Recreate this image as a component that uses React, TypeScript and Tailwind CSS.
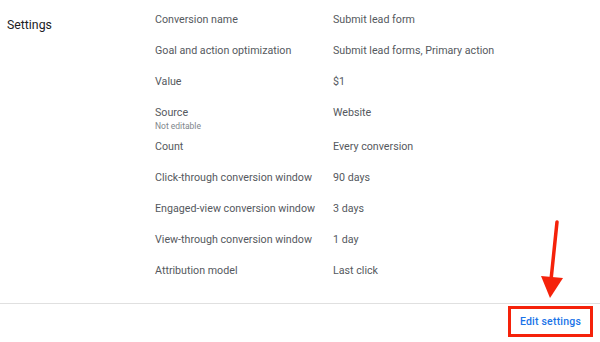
import React from "react";

const rows: { label: string; value: string; note?: string }[] = [
  { label: "Conversion name", value: "Submit lead form" },
  { label: "Goal and action optimization", value: "Submit lead forms, Primary action" },
  { label: "Value", value: "$1" },
  { label: "Source", value: "Website", note: "Not editable" },
  { label: "Count", value: "Every conversion" },
  { label: "Click-through conversion window", value: "90 days" },
  { label: "Engaged-view conversion window", value: "3 days" },
  { label: "View-through conversion window", value: "1 day" },
  { label: "Attribution model", value: "Last click" },
];

export default function App() {
  return (
    <div className="relative w-[600px] h-[342px] overflow-hidden bg-white font-['Roboto',sans-serif]">
      <div className="flex">
        <div className="w-[155px] pl-[7px] pt-[16px] text-[12.3px] leading-[18px] text-[#202124]">
          Settings
        </div>
        <div className="flex flex-col pt-[4px] text-[10.7px] text-[#55595e]">
          {rows.map((r) =>
            r.note ? (
              <div key={r.label} className="flex h-[34px] pt-[8px]">
                <div className="w-[178px]">
                  <div className="leading-[15px]">{r.label}</div>
                  <div className="text-[8.5px] leading-[12px] text-[#80868b]">{r.note}</div>
                </div>
                <div className="leading-[15px]">{r.value}</div>
              </div>
            ) : (
              <div key={r.label} className="flex h-[31px] items-center leading-[15px]">
                <div className="w-[178px]">{r.label}</div>
                <div>{r.value}</div>
              </div>
            )
          )}
        </div>
      </div>

      <div className="mt-[17px] border-t border-[#e0e0e0]">
        <div className="flex justify-end pr-[7px] pt-[2px]">
          <div className="flex h-[31px] w-[85px] items-center justify-center border-[3px] border-[#f5220a]">
            <span className="text-[10.5px] font-medium tracking-[0.2px] text-[#1a73e8]">Edit settings</span>
          </div>
        </div>
      </div>

      <svg className="absolute left-[536px] top-[218px]" width="32" height="84" viewBox="0 0 32 84">
        <line x1="21" y1="4" x2="15" y2="62" stroke="#f5220a" strokeWidth="3.5" strokeLinecap="round" />
        <polygon points="5,58 27,60 14,80" fill="#f5220a" />
      </svg>
    </div>
  );
}
